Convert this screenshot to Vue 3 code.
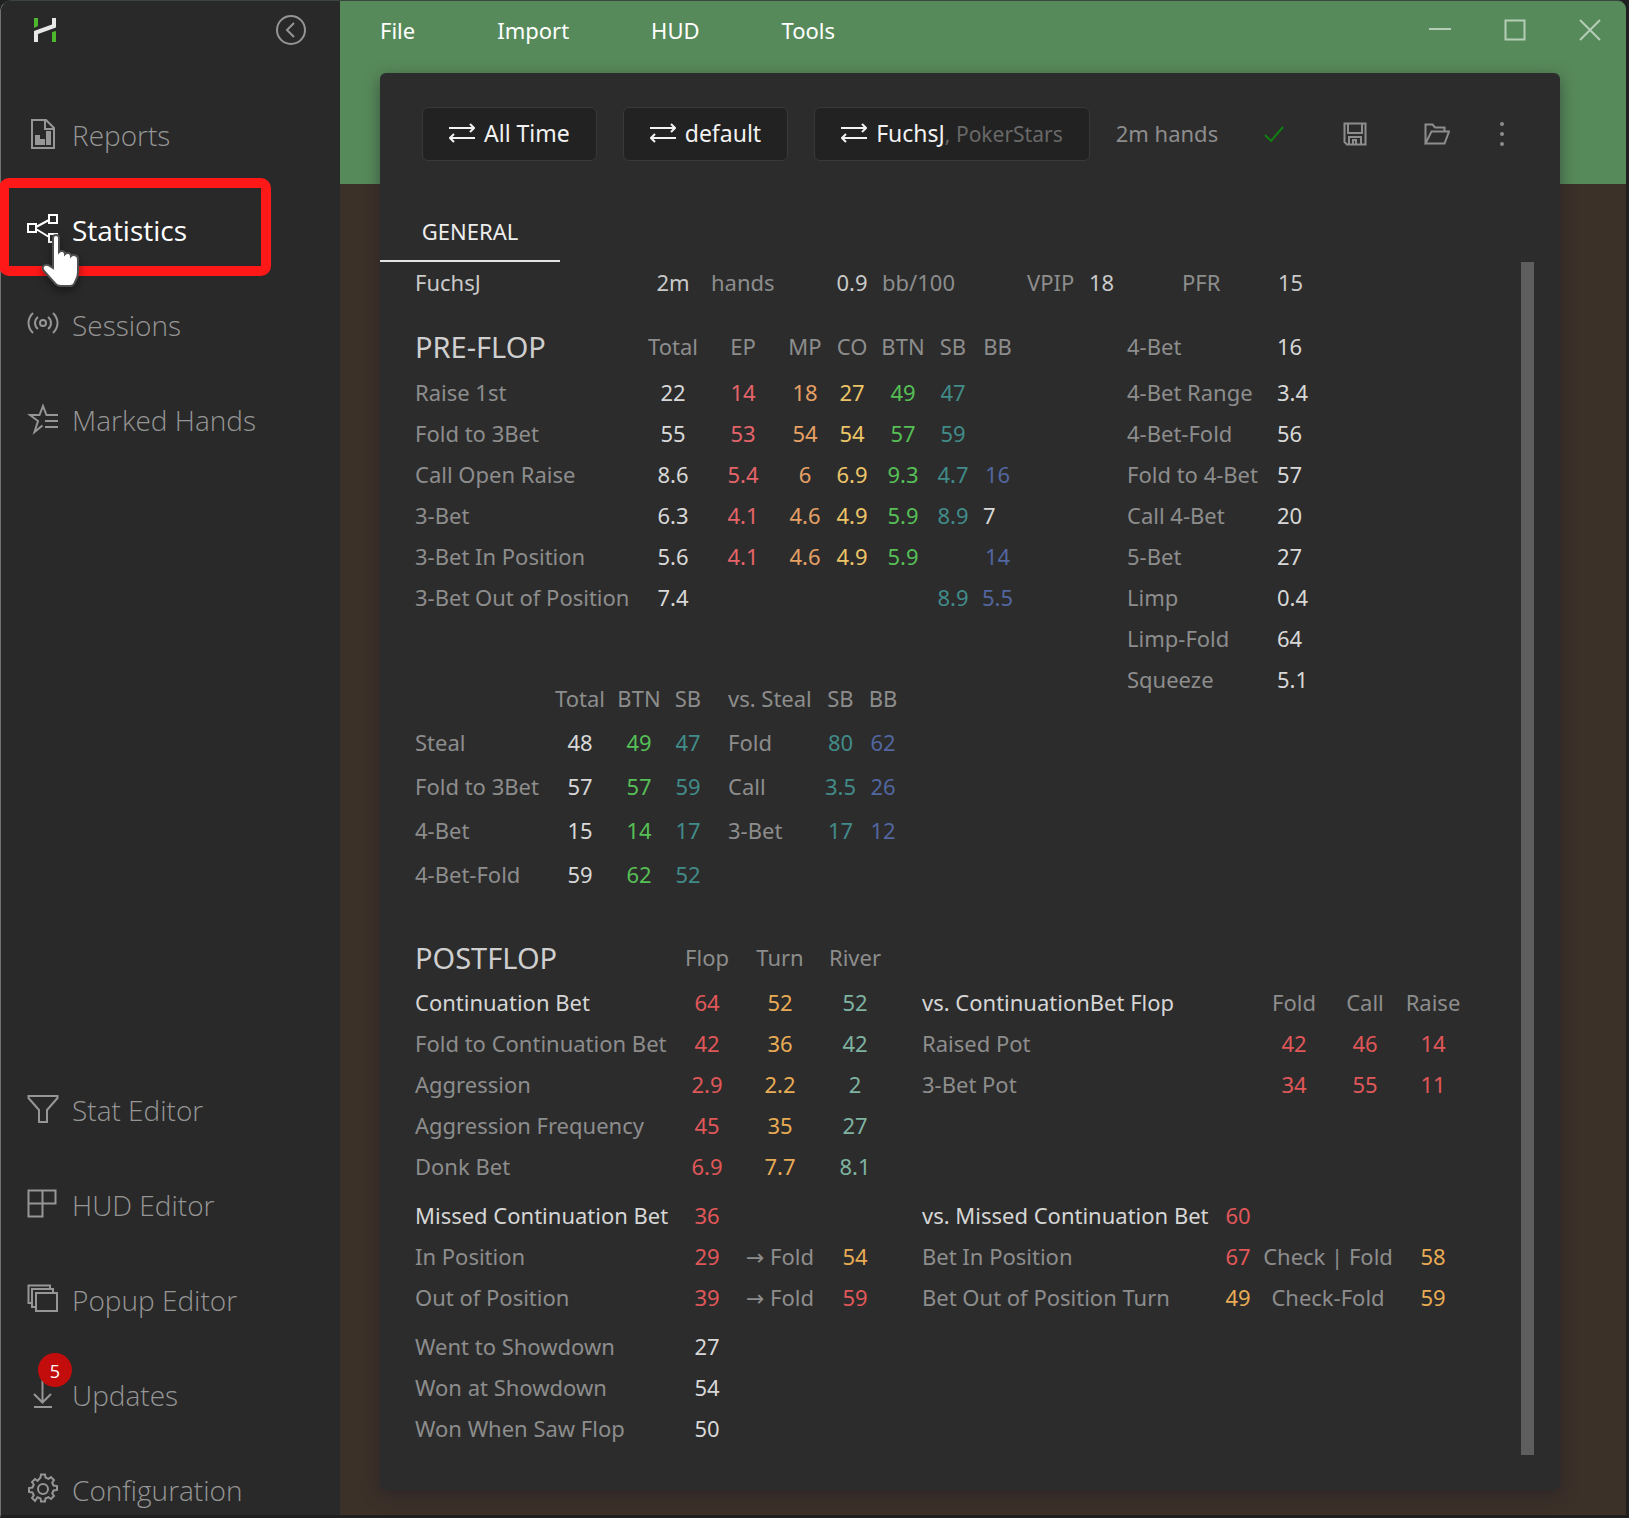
<script setup>
import { ref } from 'vue'

const active = ref('Statistics')
const tab = ref('GENERAL')

const mainNav = [
  { name: 'Reports', icon: 'report' },
  { name: 'Statistics', icon: 'stats' },
  { name: 'Sessions', icon: 'sessions' },
  { name: 'Marked Hands', icon: 'marked' }
]

const toolNav = [
  { name: 'Stat Editor', icon: 'filter' },
  { name: 'HUD Editor', icon: 'hud' },
  { name: 'Popup Editor', icon: 'popup' },
  { name: 'Updates', icon: 'updates', badge: 5 },
  { name: 'Configuration', icon: 'config' }
]

const menu = ['File', 'Import', 'HUD', 'Tools']

const preflopCols = ['Total', 'EP', 'MP', 'CO', 'BTN', 'SB', 'BB']
const preflopColors = ['white', 'red', 'orange', 'yellow', 'green', 'teal', 'blue']
const preflop = [
  { label: 'Raise 1st', values: ['22', '14', '18', '27', '49', '47', ''] },
  { label: 'Fold to 3Bet', values: ['55', '53', '54', '54', '57', '59', ''] },
  { label: 'Call Open Raise', values: ['8.6', '5.4', '6', '6.9', '9.3', '4.7', '16'] },
  { label: '3-Bet', values: ['6.3', '4.1', '4.6', '4.9', '5.9', '8.9', '7'], plainLast: true },
  { label: '3-Bet In Position', values: ['5.6', '4.1', '4.6', '4.9', '5.9', '', '14'] },
  { label: '3-Bet Out of Position', values: ['7.4', '', '', '', '', '8.9', '5.5'] }
]

const fourBet = [
  ['4-Bet', '16'],
  ['4-Bet Range', '3.4'],
  ['4-Bet-Fold', '56'],
  ['Fold to 4-Bet', '57'],
  ['Call 4-Bet', '20'],
  ['5-Bet', '27'],
  ['Limp', '0.4'],
  ['Limp-Fold', '64'],
  ['Squeeze', '5.1']
]

const steal = [
  ['Steal', '48', '49', '47'],
  ['Fold to 3Bet', '57', '57', '59'],
  ['4-Bet', '15', '14', '17'],
  ['4-Bet-Fold', '59', '62', '52']
]

const vsSteal = [
  ['Fold', '80', '62'],
  ['Call', '3.5', '26'],
  ['3-Bet', '17', '12']
]

const postflop = [
  ['Continuation Bet', '64', '52', '52'],
  ['Fold to Continuation Bet', '42', '36', '42'],
  ['Aggression', '2.9', '2.2', '2'],
  ['Aggression Frequency', '45', '35', '27'],
  ['Donk Bet', '6.9', '7.7', '8.1']
]

const vsCbet = [
  ['Raised Pot', '42', '46', '14'],
  ['3-Bet Pot', '34', '55', '11']
]

const showdown = [
  ['Went to Showdown', '27'],
  ['Won at Showdown', '54'],
  ['Won When Saw Flop', '50']
]
</script>

<template>
  <div class="window">
    <aside class="sidebar">
      <div class="brand">
        <svg class="logo" width="24" height="26" viewBox="0 0 24 26">
          <path d="M0 1h4v8l-4 2zM18 15l4-1v11h-4z" fill="#4db82c" />
          <path d="M2 25V15.500L20 9V1" fill="none" stroke="#e8e8e8" stroke-width="4" />
        </svg>
        <button class="collapse" aria-label="Collapse">
          <svg width="32" height="32" viewBox="0 0 32 32">
            <circle cx="16" cy="16" r="14" />
            <path d="M19 9l-7 7 7 7" />
          </svg>
        </button>
      </div>

      <nav class="nav">
        <a
          v-for="item in mainNav"
          :key="item.name"
          href="#"
          class="nav-item"
          :class="{ active: active === item.name }"
          @click.prevent="active = item.name"
        >
          <svg class="nav-icon" width="32" height="32" viewBox="0 0 32 32">
            <g v-if="item.icon === 'report'">
              <path d="M5 2h14l8 8v20H5zM18 2v9h9" />
              <path d="M8 17h5v10H8zM13 21h5v6h-5zM19 13h5v14h-5z" class="solid" />
            </g>
            <g v-else-if="item.icon === 'stats'">
              <path d="M1 11h8v8H1zM22 2h8v8h-8zM22 21h8v8h-8zM9 14l13-7M9 16l13 8" />
            </g>
            <g v-else-if="item.icon === 'sessions'">
              <circle cx="16" cy="15" r="3" />
              <path d="M11 9c-4 3-4 9 0 12M21 9c4 3 4 9 0 12M6 5c-6 6-6 14 0 20M26 5c6 6 6 14 0 20" />
            </g>
            <g v-else>
              <path d="M31 12H19.500L16 3l-3.500 9H3l8 6-3.500 11 8-6.500M18 18h13M18 24h13" />
            </g>
          </svg>
          <span class="nav-label">{{ item.name }}</span>
        </a>
      </nav>

      <nav class="nav nav-tools">
        <a
          v-for="item in toolNav"
          :key="item.name"
          href="#"
          class="nav-item"
          :class="{ active: active === item.name }"
          @click.prevent="active = item.name"
        >
          <svg class="nav-icon" width="32" height="32" viewBox="0 0 32 32">
            <g v-if="item.icon === 'filter'">
              <path d="M1.500 3h29v2L20 17v12h-8V17L1.500 5z" />
            </g>
            <g v-else-if="item.icon === 'hud'">
              <path d="M1.500 2.500h27v13h-27zM1.500 15.500v13h14v-26" />
            </g>
            <g v-else-if="item.icon === 'popup'">
              <path d="M9 10h21v18H9zM9 24H5V6h21v4M5 20H1.500V2.500H23V6" />
            </g>
            <g v-else-if="item.icon === 'updates'">
              <path d="M15.500 2v22M7 16l8.500 8.500L24 16M7 29h18" />
            </g>
            <g v-else>
              <circle cx="16" cy="16" r="5" />
              <path d="M13.500 4.500L14 1.500h4l.5 3 3 1.300 2.500-1.800 3 3-1.800 2.500 1.300 3 3.500.5v4l-3.500.5-1.300 3 1.800 2.500-3 3-2.500-1.800-3 1.300-.5 3h-4l-.5-3-3-1.300L8 28l-3-3 1.800-2.500-1.300-3L2 19v-4l3.500-.5 1.300-3L5 9l3-3 2.500 1.800z" />
            </g>
          </svg>
          <span v-if="item.badge" class="badge">{{ item.badge }}</span>
          <span class="nav-label">{{ item.name }}</span>
        </a>
      </nav>

      <div class="highlight"></div>
      <svg class="pointer" width="46" height="56" viewBox="0 0 46 56">
        <path
          d="M14 4c0-4 6-4 6 0v14c2-2 6-1 6 2 2-2 6-1 6 2 2-2 7-1 7 3v13c0 5-1 6-3 10-1 3-3 4-5 4H22c-3 0-5-1-7-4L5 37c-3-4 0-7 4-6l5 3z"
        />
      </svg>
    </aside>

    <div class="main">
      <header class="titlebar">
        <nav class="menu">
          <button v-for="m in menu" :key="m">{{ m }}</button>
        </nav>
        <div class="controls">
          <button aria-label="Minimize">
            <svg width="22" height="22" viewBox="0 0 22 22"><path d="M0 10h22" /></svg>
          </button>
          <button aria-label="Maximize">
            <svg width="22" height="22" viewBox="0 0 22 22"><path d="M1.500 1.500h19v19h-19z" /></svg>
          </button>
          <button aria-label="Close">
            <svg width="22" height="22" viewBox="0 0 22 22"><path d="M1 1l20 20M21 1L1 21" /></svg>
          </button>
        </div>
      </header>

      <section class="panel">
        <div class="toolbar">
          <button class="picker">
            <svg width="26" height="20" viewBox="0 0 26 20"><path d="M0 5h25M21 1l4 4-4 4M26 15H1M5 11l-4 4 4 4" /></svg>
            <span>All Time</span>
          </button>
          <button class="picker">
            <svg width="26" height="20" viewBox="0 0 26 20"><path d="M0 5h25M21 1l4 4-4 4M26 15H1M5 11l-4 4 4 4" /></svg>
            <span>default</span>
          </button>
          <button class="picker">
            <svg width="26" height="20" viewBox="0 0 26 20"><path d="M0 5h25M21 1l4 4-4 4M26 15H1M5 11l-4 4 4 4" /></svg>
            <span>FuchsJ<span class="site">, PokerStars</span></span>
          </button>
          <span class="hands">2m hands</span>
          <div class="tools">
            <svg class="check" width="24" height="24" viewBox="0 0 24 24"><path d="M3 13l6 6L21 5" /></svg>
            <button class="save" aria-label="Save">
              <svg width="24" height="24" viewBox="0 0 24 24">
                <path d="M1.500 1.500h21v21H4l-2.500-2.500zM5 1.500V11h14V1.500M6 22v-7h12v7M10 22v-4h3v4" />
              </svg>
            </button>
            <button aria-label="Open">
              <svg width="26" height="24" viewBox="0 0 26 24">
                <path d="M1.500 21.500v-19h7l2.500 3h9.500v4M1.500 21.500h19l4.500-12H7.500z" />
              </svg>
            </button>
            <button aria-label="More">
              <svg width="6" height="26" viewBox="0 0 6 26" class="dots">
                <circle cx="3" cy="3" r="2" /><circle cx="3" cy="13" r="2" /><circle cx="3" cy="23" r="2" />
              </svg>
            </button>
          </div>
        </div>

        <div class="tabs">
          <button class="tab" :class="{ current: tab === 'GENERAL' }">GENERAL</button>
        </div>

        <div class="scroller">
          <div class="content">
            <div class="summary">
              <span class="light">FuchsJ</span>
              <span class="light mid">2m</span>
              <span>hands</span>
              <span class="light mid">0.9</span>
              <span>bb/100</span>
              <span>VPIP</span>
              <span class="light">18</span>
              <span>PFR</span>
              <span class="light">15</span>
            </div>

            <div class="preflop">
              <div>
                <table class="t-pre">
                  <colgroup>
                    <col class="w-label" /><col class="w-total" /><col class="w-ep" /><col class="w-mp" />
                    <col class="w-co" /><col class="w-btn" /><col class="w-sb" /><col class="w-bb" />
                  </colgroup>
                  <thead>
                    <tr class="head">
                      <th class="title">PRE-FLOP</th>
                      <th v-for="c in preflopCols" :key="c">{{ c }}</th>
                    </tr>
                  </thead>
                  <tbody>
                    <tr v-for="row in preflop" :key="row.label">
                      <th>{{ row.label }}</th>
                      <td
                        v-for="(v, i) in row.values"
                        :key="i"
                        :class="row.plainLast && i === 6 ? 'white start' : preflopColors[i]"
                      >{{ v }}</td>
                    </tr>
                  </tbody>
                </table>

                <div class="steals">
                  <table class="t-steal">
                    <thead>
                      <tr><th></th><th>Total</th><th>BTN</th><th>SB</th></tr>
                    </thead>
                    <tbody>
                      <tr v-for="r in steal" :key="r[0]">
                        <th>{{ r[0] }}</th>
                        <td class="white">{{ r[1] }}</td>
                        <td class="green">{{ r[2] }}</td>
                        <td class="teal">{{ r[3] }}</td>
                      </tr>
                    </tbody>
                  </table>
                  <table class="t-vs-steal">
                    <thead>
                      <tr><th>vs. Steal</th><th>SB</th><th>BB</th></tr>
                    </thead>
                    <tbody>
                      <tr v-for="r in vsSteal" :key="r[0]">
                        <th>{{ r[0] }}</th>
                        <td class="teal">{{ r[1] }}</td>
                        <td class="blue">{{ r[2] }}</td>
                      </tr>
                    </tbody>
                  </table>
                </div>
              </div>

              <table class="t-four">
                <tbody>
                  <tr v-for="(r, i) in fourBet" :key="r[0]" :class="{ head: i === 0 }">
                    <th>{{ r[0] }}</th>
                    <td class="white">{{ r[1] }}</td>
                  </tr>
                </tbody>
              </table>
            </div>

            <div class="pair postflop">
              <table class="t-post">
                <thead>
                  <tr class="head"><th class="title">POSTFLOP</th><th>Flop</th><th>Turn</th><th>River</th></tr>
                </thead>
                <tbody>
                  <tr v-for="(r, i) in postflop" :key="r[0]">
                    <th :class="{ strong: i === 0 }">{{ r[0] }}</th>
                    <td class="crimson">{{ r[1] }}</td>
                    <td class="amber">{{ r[2] }}</td>
                    <td class="mint">{{ r[3] }}</td>
                  </tr>
                </tbody>
              </table>
              <table class="t-vs-cbet">
                <thead>
                  <tr><th class="strong">vs. ContinuationBet Flop</th><th>Fold</th><th>Call</th><th>Raise</th></tr>
                </thead>
                <tbody>
                  <tr v-for="r in vsCbet" :key="r[0]">
                    <th>{{ r[0] }}</th>
                    <td v-for="v in r.slice(1)" :key="v" class="crimson">{{ v }}</td>
                  </tr>
                </tbody>
              </table>
            </div>

            <div class="pair">
              <table class="t-post">
                <tbody>
                  <tr><th class="strong">Missed Continuation Bet</th><td class="crimson">36</td><td></td><td></td></tr>
                  <tr><th>In Position</th><td class="crimson">29</td><td><span class="arrow">→</span> Fold</td><td class="amber">54</td></tr>
                  <tr><th>Out of Position</th><td class="crimson">39</td><td><span class="arrow">→</span> Fold</td><td class="crimson">59</td></tr>
                </tbody>
              </table>
              <table class="t-vs-missed">
                <tbody>
                  <tr><th class="strong">vs. Missed Continuation Bet</th><td class="crimson">60</td><td></td><td></td></tr>
                  <tr><th>Bet In Position</th><td class="crimson">67</td><td>Check | Fold</td><td class="amber">58</td></tr>
                  <tr><th>Bet Out of Position Turn</th><td class="amber">49</td><td>Check-Fold</td><td class="amber">59</td></tr>
                </tbody>
              </table>
            </div>

            <div class="pair">
              <table class="t-post">
                <tbody>
                  <tr v-for="r in showdown" :key="r[0]">
                    <th>{{ r[0] }}</th><td class="white">{{ r[1] }}</td><td></td><td></td>
                  </tr>
                </tbody>
              </table>
            </div>
          </div>
          <div class="scrollbar"></div>
        </div>
      </section>
    </div>
  </div>
</template>

<style>
body {
  margin: 0;
  background: #1f2122;
}
</style>

<style scoped>
* {
  box-sizing: border-box;
}

.window {
  display: flex;
  min-height: 100vh;
  border-style: solid;
  border-width: 1px 3px 3px 1px;
  border-color: #3c463e #1f1f20 #1f1f20 #6f7374;
  border-radius: 12px 12px 0 0;
  font-family: "Noto Sans", "Open Sans", sans-serif;
  font-size: 22px;
  color: #8d8d8d;
}

button {
  padding: 0;
  border: 0;
  background: none;
  font: inherit;
  color: inherit;
}

svg {
  display: block;
  fill: none;
  stroke: currentColor;
  stroke-width: 2;
}

/* sidebar */
.sidebar {
  position: relative;
  display: flex;
  flex-direction: column;
  flex: none;
  width: 339px;
  padding-bottom: 6px;
  border-radius: 10px 0 0 0;
  background: #292929;
}

.brand {
  display: flex;
  justify-content: space-between;
  align-items: center;
  height: 58px;
  padding: 0 33px;
}

.logo {
  stroke: none;
}

.collapse {
  color: #959595;
}

.nav {
  display: flex;
  flex-direction: column;
  gap: 55px;
  margin-top: 55px;
}

.nav-tools {
  margin-top: auto;
}

.nav-item {
  position: relative;
  display: flex;
  align-items: center;
  gap: 13px;
  height: 40px;
  padding-left: 26px;
  color: #969696;
  font-family: "Open Sans", "Noto Sans", sans-serif;
  font-size: 28px;
  font-weight: 300;
  line-height: 36px;
  text-decoration: none;
}

.nav-item.active {
  color: #fff;
  font-weight: 400;
}

.nav-label {
  padding-top: 2px;
}

.solid {
  fill: currentColor;
  stroke: none;
}

.badge {
  position: absolute;
  left: 37px;
  top: -21px;
  width: 34px;
  height: 34px;
  border-radius: 50%;
  background: #c30d0d;
  color: #fff;
  font-size: 18px;
  font-weight: 400;
  line-height: 36px;
  text-align: center;
}

.highlight {
  position: absolute;
  left: -2px;
  top: 177px;
  width: 272px;
  height: 98px;
  border: 10px solid #ff1818;
  border-radius: 10px;
  pointer-events: none;
}

.pointer {
  position: absolute;
  left: 38px;
  top: 233px;
  fill: #fff;
  stroke: #505050;
  filter: drop-shadow(0 4px 4px rgba(0, 0, 0, 0.4));
  pointer-events: none;
}

/* main area */
.main {
  flex: 1;
  min-width: 0;
  padding-bottom: 25px;
  border-radius: 0 8px 0 0;
  background: linear-gradient(#578a5a 183px, #3c3129 183px);
}

.titlebar {
  display: flex;
  justify-content: space-between;
  height: 72px;
  padding: 0 25px 0 40px;
  color: #fff;
}

.menu {
  display: flex;
  gap: 82px;
  height: 58px;
}

.controls {
  display: flex;
  gap: 53px;
  height: 57px;
  color: #b5cdb6;
}

.panel {
  margin: 0 66px 0 40px;
  padding: 34px 26px 35px 0;
  border-radius: 6px;
  background: #2c2c2c;
  box-shadow: 0 5px 16px rgba(32, 26, 38, 0.5);
}

.toolbar {
  display: flex;
  align-items: center;
  height: 54px;
  padding-left: 42px;
}

.picker {
  display: flex;
  align-items: center;
  gap: 9px;
  height: 54px;
  margin-right: 26px;
  padding: 0 26px 2px;
  border: 1px solid #393939;
  border-radius: 6px;
  background: #222;
  color: #f2f2f2;
  font-size: 23px;
  white-space: nowrap;
}

.site {
  color: #686868;
  font-size: 21px;
}

.hands {
  padding-bottom: 2px;
}

.tools {
  display: flex;
  align-items: center;
  gap: 49px;
  margin-left: auto;
  margin-right: 29px;
}

.check,
.save {
  margin-right: 8px;
}

.check {
  color: #117d11;
}

.dots {
  fill: currentColor;
  stroke: none;
}

.tabs {
  display: flex;
  margin-top: 44px;
}

.tab {
  width: 180px;
  height: 57px;
  padding-bottom: 3px;
  border-bottom: 2px solid transparent;
  color: #ededed;
}

.tab.current {
  border-color: #e4e4e4;
}

.scroller {
  display: flex;
  justify-content: space-between;
}

.scrollbar {
  width: 13px;
  background: #5e5e5e;
}

.content {
  padding: 0 0 6px 35px;
  line-height: 30px;
}

.summary {
  display: grid;
  grid-template-columns: 220px 76px 111px 60px 145px 62px 93px 96px auto;
  align-items: center;
  height: 41px;
  padding-bottom: 2px;
}

.light {
  color: #c9c9c9;
}

.mid {
  text-align: center;
}

.preflop {
  display: flex;
  align-items: flex-start;
  gap: 111px;
  margin-top: 19px;
}

.steals {
  display: flex;
  align-items: flex-start;
  gap: 23px;
  margin-top: 59px;
}

.pair {
  display: flex;
  align-items: flex-start;
  gap: 34px;
  margin-top: 8px;
}

.postflop {
  margin-top: 36px;
}

table {
  border-collapse: collapse;
  table-layout: fixed;
}

tr {
  height: 41px;
}

tr.head {
  height: 50px;
}

th,
td {
  padding: 0 0 2px;
  font-weight: 400;
  text-align: center;
  white-space: nowrap;
}

th:first-child {
  text-align: left;
}

th.title {
  padding: 0;
  color: #cfcfcf;
  font-size: 29px;
}

th.strong {
  color: #d6d6d6;
}

.t-pre { width: 601px; }
.w-label { width: 230px; }
.w-total { width: 56px; }
.w-ep { width: 84px; }
.w-mp { width: 40px; }
.w-co { width: 54px; }
.w-btn { width: 48px; }
.w-sb { width: 52px; }
.w-bb { width: 37px; }

.t-steal { width: 290px; }
.t-steal th:nth-child(1) { width: 138px; }
.t-steal th:nth-child(2) { width: 54px; }
.t-steal th:nth-child(3) { width: 64px; }

.t-vs-steal { width: 177px; }
.t-vs-steal th:nth-child(1) { width: 92px; }
.t-vs-steal th:nth-child(2) { width: 41px; }

.steals tr { height: 44px; }

.t-four { width: 200px; }
.t-four th { width: 150px; }
.t-four td { text-align: left; }

.t-post { width: 473px; }
.t-post tr > :nth-child(1) { width: 261px; }
.t-post tr > :nth-child(2) { width: 62px; }
.t-post tr > :nth-child(3) { width: 84px; }

.t-vs-cbet { width: 540px; margin-top: 49px; }
.t-vs-cbet th:nth-child(1) { width: 340px; }
.t-vs-cbet th:nth-child(2) { width: 64px; }
.t-vs-cbet th:nth-child(3) { width: 78px; }

.t-vs-missed { width: 544px; }
.t-vs-missed tr > :nth-child(1) { width: 298px; }
.t-vs-missed tr > :nth-child(2) { width: 36px; }
.t-vs-missed tr > :nth-child(3) { width: 144px; }

.postflop tr.head { height: 49px; }

.arrow {
  font-family: "DejaVu Sans", sans-serif;
  font-size: 22px;
  line-height: 1;
}

td.start { padding-left: 4px; text-align: left; }

.white { color: #d8d8d8; }
.red { color: #e5646a; }
.orange { color: #e5a065; }
.yellow { color: #ecc468; }
.green { color: #56bf56; }
.teal { color: #418b89; }
.blue { color: #52669f; }
.crimson { color: #e05759; }
.amber { color: #e8ab55; }
.mint { color: #7fb3a2; }
</style>
